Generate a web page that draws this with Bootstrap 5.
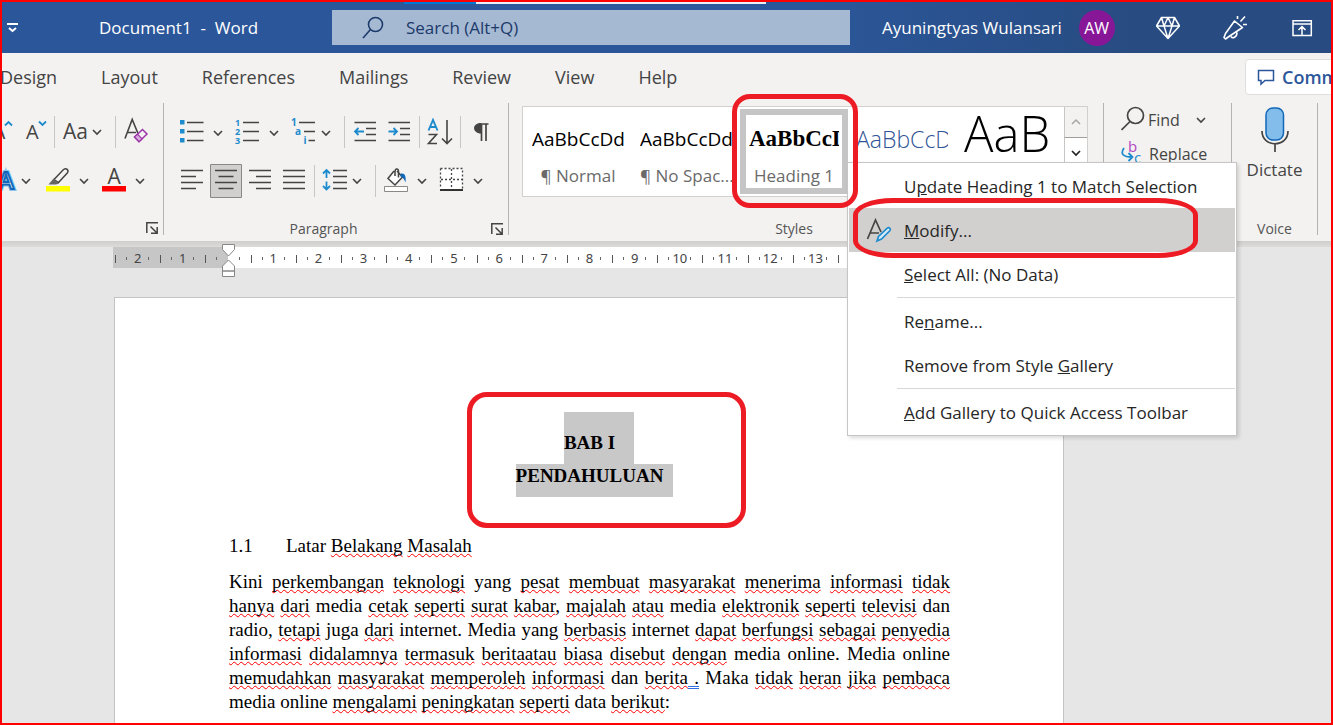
<!DOCTYPE html>
<html lang="en">
<head>
<meta charset="utf-8">
<meta name="viewport" content="width=device-width, initial-scale=1">
<title>Document1 - Word</title>
<link href="https://cdn.jsdelivr.net/npm/bootstrap@5.3.0/dist/css/bootstrap.min.css" rel="stylesheet">
<style>
  :root { --ink:#444; --blue:#2b579a; --mark:#ed1c24; }
  body { font-family:"Open Sans","Noto Sans",sans-serif; color:var(--ink); background:#e6e6e6; }
  button { font:inherit; color:inherit; background:none; border:0; padding:0; }
  svg { display:block; flex:none; }
  .frame { height:100vh; border:2px solid red; overflow:hidden; }

  /* title bar */
  .titlebar { height:51px; color:#fff; font-size:17px; background:linear-gradient(90deg,#2b579a 60%,#284c82 85%); }
  .qat { width:97px; }
  .doc-name { width:233px; white-space:pre; }
  .search { height:35px; background:#a6b9d2; padding-left:30px; gap:22px; }
  .search input { border:0; background:none; outline:0; font-size:17px; color:#1b3a6b; padding:0; min-width:0; }
  .search input::placeholder { color:#1b3a6b; opacity:1; }
  .strip { position:absolute; top:0; left:402px; width:362px; height:2px; background:linear-gradient(90deg,#0078d4 72px,#e8eef6 72px); }
  .account { padding:0 17px 0 32px; width:481px; }
  .account button { margin-left:42px; }
  .avatar { width:36px; height:36px; margin-left:17px; background:#881798; font-size:16px; }

  /* tabs */
  .tabs { height:50px; padding-bottom:2px; background:#f3f2f1; font-size:18px; }
  .tabs .nav { gap:44px; margin-left:-2px; }
  .tabs .nav-link { color:var(--ink); padding:0; }
  .comments { width:86px; }
  .comments button { width:124px; height:36px; border:1px solid #e1dfdd; border-radius:4px; background:#fff; color:var(--blue); font-weight:600; font-size:18px; padding-left:11px; gap:7px; }

  /* ribbon */
  .ribbon { height:138px; background:#f3f2f1; padding-right:13px; }
  .group { height:132px; border-right:1px solid #b5b3b1; }
  .group-label { height:12px; font-size:14px; line-height:12px; color:#555; }
  .tools { height:49px; }
  .rule { width:1px; height:32px; background:#c8c6c4; }
  .g-font { width:162px; } .g-para { width:345px; } .g-edit { width:128px; } .g-voice { width:86px; }
  .shade { height:6px; background:linear-gradient(#cfcecc,#dcdbda); }

  .gallery { height:91px; border:1px solid #d2d0ce; background:#fff; padding:2px 0 0 1px; margin:3px 15px 0 13px; }
  .cell { width:108px; height:85px; position:relative; flex:none; }
  .cell > button { width:108px; height:85px; padding:0 8px; display:flex; flex-direction:column; justify-content:space-between; }
  .cell.picked > button { border:6px solid #c5c5c5; padding:0 3px; }
  .sample { display:block; width:92px; height:60px; line-height:60px; overflow:hidden; white-space:nowrap; color:#000; text-align:left; font-size:19px; }
  .picked .sample { width:90px; height:48px; font:bold 23px/48px "Liberation Serif",serif; }
  .sample.h2s { font-size:23px; font-weight:300; color:#2f5496; }
  .sample.big { font-size:49px; font-weight:300; line-height:48px; }
  .caption { display:block; width:100%; height:25px; line-height:14px; font-size:17px; color:#6a6a6a; text-align:center; white-space:nowrap; }
  .picked .caption { height:19px; }
  .scroller { width:23px; margin-top:-2px; }
  .scroller button { height:31px; border-left:1px solid #c8c6c4; border-bottom:1px solid #a19f9d; background:#f3f2f1; }
  .scroller button + button { background:#fff; }
  .edit-tools { font-size:16px; padding-left:17px; }
  .edit-tools button { height:34px; }
  .dictate { font-size:17px; }

  /* style menu */
  .style-menu { position:absolute; z-index:3; left:107px; top:53px; width:390px; background:#fff; border:1px solid #c6c6c6; padding:1px; box-shadow:2px 2px 4px rgba(0,0,0,.15); font-size:17px; }
  .style-menu button { display:flex; align-items:center; height:44px; width:100%; padding-top:2px; color:#262626; white-space:nowrap; position:relative; }
  .style-menu .slot { width:55px; padding-left:17px; flex:none; }
  .style-menu .picked-item { background:#d2d0ce; }
  .style-menu hr { margin:1px 0 1px 48px; border:0; height:1px; background:#d8d8d8; opacity:1; }
  .callout { position:absolute; border:5px solid var(--mark); pointer-events:none; }
  .callout-style { inset:-15px -10px -14px -8px; border-radius:18px; z-index:5; }
  .callout-modify { left:4px; top:-10px; width:345px; height:60px; border-radius:40px / 17px; }
  .callout-title { left:238px; top:-20px; width:279px; height:136px; border-radius:20px; }

  /* ruler and page */
  .ruler { height:21px; width:953px; margin-left:111px; padding:0 2px; font:13px/22px "Noto Sans",sans-serif; color:#444; background:linear-gradient(90deg,#c6c6c6 115px,#fff 115px,#fff 838px,#c6c6c6 838px); position:relative; }
  .ruler span { flex:1 1 0; text-align:center; height:21px;
    background:linear-gradient(#555,#555) 0 60%/1px 8px no-repeat, linear-gradient(#666,#666) 25% 55%/1px 3px no-repeat, linear-gradient(#666,#666) 75% 55%/1px 3px no-repeat; }
  .indent { position:absolute; left:109px; top:-3px; }
  .sheet { width:950px; margin:29px 0 0 112px; background:#fff; border:1px solid #c3c3c3; padding:114px 113px 60px 114px; min-height:700px; color:#000; font:19px/24px "Liberation Serif",serif; }
  .titles { position:relative; margin:0 0 37px; font-weight:bold; text-align:center; }
  .titles h1 { font:inherit; margin:0; }
  .sel { background:#c8c8c8; display:inline-block; vertical-align:top; }
  .sel-a { padding:19px 19px 9px 0; margin-right:-19px; }
  .sel-b { padding:0 10px 9px 0; margin-right:-10px; }
  .sub { font:inherit; margin:0 0 12px; }
  .sub .num { display:inline-block; width:57px; }
  .ln { display:block; text-align:justify; text-align-last:justify; white-space:nowrap; }
  .ln.end { text-align-last:left; }
  s { text-decoration:underline wavy #f00 1px; text-underline-offset:1px; text-decoration-skip-ink:none; }
  .gram { text-decoration:underline double #2f6fe0 1px; text-underline-offset:2px; text-decoration-skip-ink:none; white-space:pre; }
</style>
</head>
<body>
<svg width="0" height="0" class="position-absolute" aria-hidden="true">
  <defs>
    <path id="chev" d="M-4 -2 L0 2 L4 -2" fill="none" stroke="#444" stroke-width="1.6"/>
    <g id="launch" fill="none" stroke="#444"><path d="M.8 11V.8H12" stroke-width="1.5"/><path d="M4.5 4.5L11 11M11.2 5V11.2H5" stroke-width="1.5"/></g>
  </defs>
</svg>
<div class="frame d-flex flex-column">
  <header class="titlebar d-flex align-items-center flex-shrink-0 position-relative">
    <div class="strip"></div>
    <button class="qat flex-shrink-0" aria-label="Customize Quick Access Toolbar"><svg width="18" height="14" viewBox="2 21 18 14" fill="none" stroke="#fff" stroke-width="2"><path d="M7 24H18M9 28l3.500 3 3.500-3"/></svg></button>
    <div class="doc-name flex-shrink-0">Document1  -  Word</div>
    <label class="search d-flex align-items-center flex-grow-1">
      <svg width="22" height="24" viewBox="0 0 22 24" fill="none" stroke="#1b3a6b" stroke-width="1.6"><circle cx="13.500" cy="8.500" r="7"/><path d="M8.500 13.500L1 22"/></svg>
      <input class="flex-grow-1" type="text" placeholder="Search (Alt+Q)" aria-label="Search">
    </label>
    <div class="account d-flex align-items-center flex-shrink-0">
      <span>Ayuningtyas Wulansari</span>
      <span class="avatar rounded-circle d-flex align-items-center justify-content-center">AW</span>
      <button class="ms-auto" aria-label="Premium"><svg width="24" height="24" viewBox="1155 14 24 24" fill="none" stroke="#fff" stroke-width="1.5" stroke-linejoin="round"><path d="M1160.500 15.500h13l5 8.500-11.500 12.500-11.500-12.500zM1155.500 24h23M1163 24l4 12.500 4-12.500-4-8.500zM1160.500 15.500l2.500 8.500M1173.500 15.500l-2.500 8.500"/></svg></button>
      <button aria-label="What's new"><svg width="26" height="26" viewBox="1222 14 26 26" fill="none" stroke="#fff" stroke-width="1.600" stroke-linejoin="round"><path d="M1234.500 20l8 6.500-13.500 9-3.500 2.500-1.500-1.500 1.500-4zM1231 35.500c1.500 2.500 6 1 6-4M1237.500 18v-3M1240.500 20.500l4.500-5M1243 23.500h4"/></svg></button>
      <button aria-label="Ribbon display options"><svg width="24" height="18" viewBox="1290 18 24 18" fill="none" stroke="#fff" stroke-width="1.500"><path d="M1293 19.800h18.300v14.800H1293zM1293 23h18.300M1302 34v-8M1298.500 29l3.500-3.500 3.500 3.500"/></svg></button>
    </div>
  </header>

  <nav class="tabs d-flex justify-content-between align-items-center flex-shrink-0" aria-label="Ribbon tabs">
    <div class="nav flex-nowrap">
      <a class="nav-link" href="#">Design</a><a class="nav-link" href="#">Layout</a><a class="nav-link" href="#">References</a><a class="nav-link" href="#">Mailings</a><a class="nav-link" href="#">Review</a><a class="nav-link" href="#">View</a><a class="nav-link" href="#">Help</a>
    </div>
    <div class="comments overflow-hidden flex-shrink-0"><button class="d-flex align-items-center"><svg width="18" height="18" viewBox="0 0 18 18" fill="none" stroke="#2b579a" stroke-width="1.500"><path d="M1.500 2.500h15v10H8L4 16v-3.500H1.500z"/></svg>Comments</button></div>
  </nav>

  <div class="ribbon d-flex flex-shrink-0">
    <section class="group g-font d-flex flex-column flex-shrink-0" aria-label="Font">
      <div class="tools d-flex align-items-center mt-1">
        <button aria-label="Grow font"><svg width="18" height="49" viewBox="2 108 18 49"><text x="-8" y="139.500" font-size="21" fill="#444">A</text><path d="M5 126.500l3.500-3.500 3.500 3.500" fill="none" stroke="#1e8bcd" stroke-width="1.800"/></svg></button>
        <button aria-label="Shrink font"><svg width="34" height="49" viewBox="20 108 34 49"><text x="26" y="139.500" font-size="20" fill="#444">A</text><path d="M39 122.500l3.500 3.500 3.500-3.500" fill="none" stroke="#1e8bcd" stroke-width="1.800"/></svg></button>
        <span class="rule"></span>
        <button aria-label="Change case"><svg width="60" height="49" viewBox="55 108 60 49"><text x="63" y="139.500" font-size="21" fill="#444">Aa</text><use href="#chev" x="97" y="133"/></svg></button>
        <span class="rule"></span>
        <button aria-label="Clear formatting"><svg width="40" height="49" viewBox="116 108 40 49"><path d="M125 139.500l7.200-19 5.800 14M127.500 133.500h8.500" fill="none" stroke="#444" stroke-width="1.600"/><path d="M134.500 138l8-7.500 4.500 4.500-8 7.700z" fill="#f3f2f1" stroke="#9a36a6" stroke-width="1.500"/><path d="M134.500 138l3-2.800 4.600 4.700-3.100 2.800z" fill="#d9a8df" stroke="#9a36a6" stroke-width="1.200"/></svg></button>
      </div>
      <div class="tools d-flex align-items-center">
        <button aria-label="Text effects"><svg width="36" height="49" viewBox="2 157 36 49"><text x="-2" y="190" font-size="24" font-weight="600" fill="#fff" stroke="#8ec5ef" stroke-width="4">A</text><text x="-2" y="190" font-size="24" font-weight="600" fill="#fff" stroke="#1268b8" stroke-width="2">A</text><use href="#chev" x="26" y="182"/></svg></button>
        <button aria-label="Highlight colour"><svg width="58" height="49" viewBox="38 157 58 49"><path d="M46 187h24v5.500H46z" fill="#ff0"/><path d="M54 180.500l9.500-10c3-2 5.500.5 4 3.200l-9 9.800z" fill="none" stroke="#444" stroke-width="1.500"/><path d="M53.500 179.500l5.500 5-3 1h-7.500z" fill="#666"/><use href="#chev" x="84" y="182"/></svg></button>
        <button aria-label="Font colour"><svg width="56" height="49" viewBox="96 157 56 49"><path d="M102 187h24v5.500h-24z" fill="red"/><text x="107.500" y="185" font-size="21" fill="#444">A</text><use href="#chev" x="140" y="182"/></svg></button>
      </div>
      <div class="mt-auto d-flex justify-content-end pe-1"><button aria-label="Font settings"><svg width="13" height="13" viewBox="0 0 13 13"><use href="#launch"/></svg></button></div>
    </section>

    <section class="group g-para d-flex flex-column flex-shrink-0" aria-label="Paragraph">
      <div class="tools d-flex align-items-center mt-1">
        <button aria-label="Bullets"><svg width="66" height="49" viewBox="164 108 66 49"><path d="M180 121h4.500v4.500H180zM180 130h4.500v4.500H180zM180 139h4.500v4.500H180z" fill="#1e8bcd"/><path d="M187 123.500h16.500M187 132.500h16.500M187 141.500h16.500" stroke="#444" stroke-width="1.600"/><use href="#chev" x="218" y="134"/></svg></button>
        <button aria-label="Numbering"><svg width="56" height="49" viewBox="230 108 56 49"><g font-size="9" font-weight="700" fill="#1e8bcd"><text x="235" y="127">1</text><text x="235" y="136">2</text><text x="235" y="145">3</text></g><path d="M243 123.500h16M243 132.500h16M243 141.500h16" stroke="#444" stroke-width="1.600"/><use href="#chev" x="274" y="134"/></svg></button>
        <button aria-label="Multilevel list"><svg width="58" height="49" viewBox="286 108 58 49"><g font-size="10" font-weight="700" fill="#1e8bcd"><text x="291" y="127">1</text><text x="295" y="136">a</text><text x="303.500" y="145">i</text></g><path d="M299 123.500h16M304 132.500h11M308.500 141.500h6.500" stroke="#444" stroke-width="1.600"/><use href="#chev" x="326" y="134"/></svg></button>
        <span class="rule"></span>
        <button aria-label="Decrease indent"><svg width="38" height="49" viewBox="345 108 38 49" fill="none"><path d="M354.500 123.500H376M366 129.500h10M366 135.500h10M354.500 141.500H376" stroke="#444" stroke-width="1.600"/><path d="M364 132.500h-8.500M358.500 129l-3.500 3.500 3.500 3.500" stroke="#1e8bcd" stroke-width="1.800"/></svg></button>
        <button aria-label="Increase indent"><svg width="36" height="49" viewBox="383 108 36 49" fill="none"><path d="M388.500 123.500H410M400 129.500h10M400 135.500h10M388.500 141.500H410" stroke="#444" stroke-width="1.600"/><path d="M388.500 132.500h8.500M393.500 129l3.500 3.500-3.500 3.500" stroke="#1e8bcd" stroke-width="1.800"/></svg></button>
        <span class="rule"></span>
        <button aria-label="Sort"><svg width="40" height="49" viewBox="420 108 40 49" fill="none"><path d="M428.500 131.500l4.500-10.500 4.500 10.500M430 128h6" stroke="#1e8bcd" stroke-width="1.900"/><path d="M428.500 135.500h8l-8 9h8.500M447 121v23M442 139.500l5 5 5-5" stroke="#444" stroke-width="1.600"/></svg></button>
        <span class="rule"></span>
        <button aria-label="Show marks"><svg width="40" height="49" viewBox="461 108 40 49"><path d="M488.500 125H479M481.500 124.500v17.500M486 124.500v17.500" stroke="#444" stroke-width="1.700"/><path d="M481 124v10.500c-9 0-9.500-10.500 0-10.500z" fill="#444"/></svg></button>
      </div>
      <div class="tools d-flex align-items-center">
        <button aria-label="Align left"><svg width="46" height="49" viewBox="164 157 46 49"><path d="M181 171.500h22M181 177.500h15M181 183.500h22M181 189.500h15" stroke="#444" stroke-width="1.600"/></svg></button>
        <button aria-label="Centre"><svg width="32" height="49" viewBox="210 157 32 49"><path d="M210.500 165.500h31v33h-31z" fill="#d2d0ce" stroke="#8a8886"/><path d="M215 171.500h22M218.500 177.500h15M215 183.500h22M218.500 189.500h15" stroke="#444" stroke-width="1.600"/></svg></button>
        <button aria-label="Align right"><svg width="36" height="49" viewBox="242 157 36 49"><path d="M249 171.500h22M256 177.500h15M249 183.500h22M256 189.500h15" stroke="#444" stroke-width="1.600"/></svg></button>
        <button aria-label="Justify"><svg width="36" height="49" viewBox="278 157 36 49"><path d="M283 171.500h22M283 177.500h22M283 183.500h22M283 189.500h22" stroke="#444" stroke-width="1.600"/></svg></button>
        <span class="rule"></span>
        <button aria-label="Line spacing"><svg width="60" height="49" viewBox="315 157 60 49" fill="none"><path d="M333 171.500h14M333 177.500h14M333 183.500h14M333 189.500h14" stroke="#444" stroke-width="1.600"/><path d="M326.500 179v-8M323 174.500l3.500-3.500 3.500 3.500M326.500 182.500v8M323 187l3.500 3.500 3.500-3.500" stroke="#1e8bcd" stroke-width="1.800"/><use href="#chev" x="357" y="182"/></svg></button>
        <span class="rule"></span>
        <button aria-label="Shading"><svg width="58" height="49" viewBox="376 157 58 49" fill="none"><path d="M384.500 187.500h23v5h-23z" fill="#fff" stroke="#8a8886"/><path d="M394 172l-6 7.500 7 6.500 7.500-8-5.500-6M395 177v-4c0-4 3.500-4 3.500-.5v6" fill="#fff" stroke="#444" stroke-width="1.500"/><path d="M400.500 175c3.500-1.500 6 1 5 8.500-1-3-2.500-5-5-6z" fill="#1268b8"/><use href="#chev" x="422" y="182"/></svg></button>
        <button aria-label="Borders"><svg width="60" height="49" viewBox="434 157 60 49" fill="none"><path d="M440 169h23v22h-23z" fill="#fff"/><path d="M440.500 169.500h22v20M440.500 169.500v20M451.500 170v20M441 180.500h21" stroke="#444" stroke-dasharray="2 2" stroke-width="1.300"/><path d="M440 191h23" stroke="#000" stroke-width="1.600"/><use href="#chev" x="478" y="182"/></svg></button>
      </div>
      <div class="group-label mt-auto d-flex align-items-center"><span class="flex-grow-1 text-center pe-2">Paragraph</span><button class="pe-1" aria-label="Paragraph settings"><svg width="13" height="13" viewBox="0 0 13 13"><use href="#launch"/></svg></button></div>
    </section>

    <section class="group d-flex flex-column flex-grow-1" aria-label="Styles">
      <div class="gallery d-flex">
        <div class="cell"><button><span class="sample">AaBbCcDd</span><span class="caption">¶ Normal</span></button></div>
        <div class="cell"><button><span class="sample">AaBbCcDd</span><span class="caption">¶ No Spac...</span></button></div>
        <div class="cell picked">
          <button><span class="sample">AaBbCcDd</span><span class="caption">Heading 1</span></button>
          <div class="callout callout-style"></div>
          <div class="style-menu" role="menu">
            <button role="menuitem"><span class="slot"></span><span>U<u>p</u>date Heading 1 to Match Selection</span></button>
            <button role="menuitem" class="picked-item"><span class="slot"><svg width="26" height="26" viewBox="866 216 26 26" fill="none"><path d="M867.500 237l8-19 5.500 12M870 231h9" stroke="#444" stroke-width="1.700"/><path d="M877 239l1.500-4.500 9-8.500c2-1 3.500 1 2.500 2.500l-8.500 8.500z" fill="#d8ecfa" stroke="#1e8bcd" stroke-width="1.700"/></svg></span><span><u>M</u>odify...</span><span class="callout callout-modify"></span></button>
            <button role="menuitem"><span class="slot"></span><span><u>S</u>elect All: (No Data)</span></button>
            <hr>
            <button role="menuitem"><span class="slot"></span><span>Re<u>n</u>ame...</span></button>
            <button role="menuitem"><span class="slot"></span><span>Remove from Style <u>G</u>allery</span></button>
            <hr>
            <button role="menuitem"><span class="slot"></span><span><u>A</u>dd Gallery to Quick Access Toolbar</span></button>
          </div>
        </div>
        <div class="cell"><button><span class="sample h2s">AaBbCcDd</span></button></div>
        <div class="cell"><button><span class="sample big">AaB</span></button></div>
        <div class="scroller d-flex flex-column ms-auto flex-shrink-0">
          <button aria-label="Scroll up"><svg width="22" height="30" viewBox="0 0 22 30"><path d="M7 17l4-4 4 4" fill="none" stroke="#a8a6a4" stroke-width="1.500"/></svg></button>
          <button aria-label="Scroll down"><svg width="22" height="30" viewBox="0 0 22 30"><path d="M7 13l4 4 4-4" fill="none" stroke="#222" stroke-width="1.700"/></svg></button>
        </div>
      </div>
      <div class="group-label mt-auto text-center pe-4">Styles</div>
    </section>

    <section class="group g-edit flex-shrink-0" aria-label="Editing">
      <div class="edit-tools">
        <button class="d-flex align-items-center"><svg width="27" height="34" viewBox="1121 102 27 34" fill="none" stroke="#444" stroke-width="1.700"><circle cx="1135.500" cy="114.500" r="8"/><path d="M1130 120.500l-8.500 8.500"/></svg>Find<svg class="ms-3" width="10" height="8" viewBox="-5 -4 10 8"><use href="#chev"/></svg></button>
        <button class="d-flex align-items-center"><svg width="28" height="34" viewBox="1121 137 28 34" fill="none"><text x="1128" y="152" font-size="15" fill="#b146c2">b</text><text x="1134" y="163" font-size="15" fill="#1e8bcd">c</text><path d="M1124 148c-4 6-1 9 8 9M1128.500 153l4 4-4 4" stroke="#1e8bcd" stroke-width="1.800"/></svg>Replace</button>
      </div>
    </section>

    <section class="group g-voice d-flex flex-column flex-shrink-0" aria-label="Voice">
      <button class="dictate d-flex flex-column align-items-center"><svg width="30" height="54" viewBox="1260 103 30 54" fill="none"><rect x="1266" y="108" width="17.500" height="32" rx="7" fill="#83bdec" stroke="#1268b8" stroke-width="1.500"/><path d="M1262 131c0 17 26 17 26 0M1275 144v8" stroke="#444" stroke-width="1.700"/></svg>Dictate</button>
      <div class="group-label mt-auto text-center">Voice</div>
    </section>
  </div>

  <main class="flex-grow-1 overflow-hidden">
    <div class="shade"></div>
    <div class="ruler d-flex" aria-label="Ruler">
      <span>2</span><span>1</span><span></span><span>1</span><span>2</span><span>3</span><span>4</span><span>5</span><span>6</span><span>7</span><span>8</span><span>9</span><span>10</span><span>11</span><span>12</span><span>13</span><span></span><span></span><span></span><span></span><span></span>
      <svg class="indent" width="13" height="34" viewBox="0 0 13 34" fill="#fff" stroke="#8a8886"><path d="M.5.500h12v5L6.500 12 .5 5.500zM6.500 16l6 6v5H.5v-5zM.5 27h12v5.500H.5z"/></svg>
    </div>
    <article class="sheet">
      <div class="titles">
        <div class="callout callout-title"></div>
        <h1><span class="sel sel-a">BAB I</span><br><span class="sel sel-b">PENDAHULUAN</span></h1>
      </div>
      <h2 class="sub"><span class="num">1.1</span>Latar <s>Belakang</s> <s>Masalah</s></h2>
      <p class="m-0">
        <span class="ln">Kini <s>perkembangan</s> <s>teknologi</s> yang <s>pesat</s> <s>membuat</s> <s>masyarakat</s> <s>menerima</s> <s>informasi</s> <s>tidak</s></span>
        <span class="ln"><s>hanya</s> <s>dari</s> media <s>cetak</s> <s>seperti</s> <s>surat</s> <s>kabar</s>, <s>majalah</s> <s>atau</s> media <s>elektronik</s> <s>seperti</s> <s>televisi</s> dan</span>
        <span class="ln">radio, <s>tetapi</s> juga <s>dari</s> internet. Media yang <s>berbasis</s> internet <s>dapat</s> <s>berfungsi</s> <s>sebagai</s> <s>penyedia</s></span>
        <span class="ln"><s>informasi</s> <s>didalamnya</s> <s>termasuk</s> <s>beritaatau</s> <s>biasa</s> <s>disebut</s> <s>dengan</s> media online. Media online</span>
        <span class="ln"><s>memudahkan</s> <s>masyarakat</s> <s>memperoleh</s> <s>informasi</s> dan <s>berita</s><span class="gram"> .</span> Maka <s>tidak</s> <s>heran</s> <s>jika</s> <s>pembaca</s></span>
        <span class="ln end">media online <s>mengalami</s> <s>peningkatan</s> <s>seperti</s> data <s>berikut</s>:</span>
      </p>
    </article>
  </main>
</div>
<script src="https://cdn.jsdelivr.net/npm/bootstrap@5.3.0/dist/js/bootstrap.bundle.min.js"></script>
</body>
</html>
